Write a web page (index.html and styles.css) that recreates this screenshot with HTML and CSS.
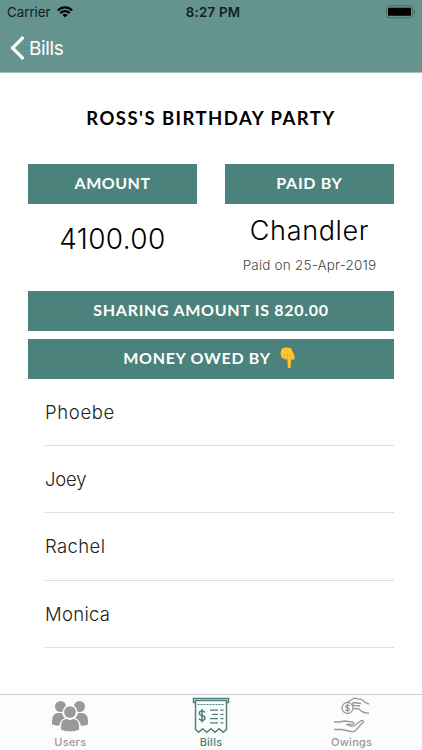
FILE: index.html
```
<!DOCTYPE html>
<html lang="en">
<head>
<meta charset="utf-8">
<title>Bills</title>
<link rel="stylesheet" href="styles.css">
</head>
<body>
<div class="screen">
  <header class="header">
    <div class="status">
      <div class="carrier"><span>Carrier</span>
        <svg width="16" height="12" viewBox="0 0 16 12" fill="none" stroke="#000" stroke-width="2.2"><path d="M.8 4.5C5 .3 11 .3 15.200 4.500M3.300 7.100C6 4.500 10 4.500 12.700 7.100"/><path fill="#000" stroke="none" d="M8 11.600 5.400 8.900Q8 6.800 10.600 8.900Z"/></svg>
      </div>
      <div class="time">8:27 PM</div>
      <svg class="battery" width="30" height="14" viewBox="0 0 30 14"><rect x=".5" y=".8" width="26" height="12" rx="3" fill="none" stroke="#456e69"/><rect x="2" y="2.800" width="23" height="8" rx="1"/><path d="M28 4.800q2 2 0 4z" fill="#385852"/></svg>
    </div>
    <div class="nav">
      <svg width="15" height="24" viewBox="0 0 15 24" fill="none" stroke="#fff" stroke-width="3.200"><path d="M13.400 1.200 2.500 12l10.900 10.800"/></svg>
      <span class="back">Bills</span>
    </div>
  </header>
  <main class="main">
    <h1 class="title">ROSS'S BIRTHDAY PARTY</h1>
    <div class="summary">
      <section class="col">
        <h2 class="bar"><span class="amount-label">AMOUNT</span></h2>
        <div class="amount">4100.00</div>
      </section>
      <section class="col">
        <h2 class="bar"><span class="paid-label">PAID BY</span></h2>
        <div class="payer">Chandler</div>
        <div class="date">Paid on 25-Apr-2019</div>
      </section>
    </div>
    <h2 class="bar sharing"><span>SHARING AMOUNT IS 820.00</span></h2>
    <h2 class="bar owed"><span>MONEY OWED BY</span>
      <svg width="18" height="22" viewBox="0 0 18 22"><path d="M3 1.500Q7-.3 12 1.200l2.500 5q1.500 2.500 1 5.500-.5 1.500-2.500.8l-1-.5-.3 7.500q-.2 1.700-1.500 1.700t-1.500-1.700L8.500 12q-1.500 1.200-2.500 0-1.600.6-2.300-.8Q1.800 11 2 9L1.500 6Z" fill="#ffc62f"/><path d="M8.600 12.200 8 7.800M5.800 11.800l-.6-4M3.500 10.800 3 7.300M8 7.500q2.500 2 4-.5M11.900 12l-1-2" fill="none" stroke="#e5a024" stroke-width=".7"/></svg>
    </h2>
    <ul class="list">
      <li><span class="n1">Phoebe</span></li>
      <li><span class="n2">Joey</span></li>
      <li><span class="n3">Rachel</span></li>
      <li><span class="n4">Monica</span></li>
    </ul>
  </main>
  <nav class="tabs">
    <div class="tab">
      <svg width="38" height="33" viewBox="0 0 38 33" fill="#999"><circle cx="9.500" cy="6.500" r="5.500"/><circle cx="28.500" cy="6.500" r="5.500"/><path d="M1 24.500v-4q0-7 6-7.500h4q.5 3.500 3 5-5 2-5.700 7.500Q5 26 1 24.500ZM37 24.500v-4q0-7-6-7.500h-4q-.5 3.500-3 5 5 2 5.700 7.500 4.300.5 7.300-1Z"/><circle cx="19" cy="12" r="6.600" stroke="#fcfcfc" stroke-width="1.500"/><path d="M9.500 30v-3.500q0-7.500 6-8 3.500 2 7 0 6 .5 6 8V30q-9.500 4-19 0Z" stroke="#fcfcfc"/></svg>
      <span>Users</span>
    </div>
    <div class="tab active">
      <svg width="38" height="37" viewBox="0 0 38 37" fill="none" stroke="#4b827b" stroke-width="1.500"><path d="M3 5.500H1.500v-4h35v4H35M3.500 3.500v29l3.200 2.700 4-3.500 4.100 3.500 4.100-3.500 4.100 3.500 4.100-3.500 4.100 3.500 3.300-2.700v-29M3 3.500h32"/><path d="M5.500 7.500h27" stroke-width="1" stroke-dasharray="2 1"/><path d="M13 15.500q-1-1.500-3-1.500-2.700 0-2.700 2.200 0 1.700 2.700 2.300 3 .7 3 2.700t-3 2.200q-2 0-3-1.700M10 12v13.500"/><path stroke-width="1.200" d="M18 13.200h8M28.500 13.200h3M20 17.400h6M28.500 17.400h3M18 21.600h8M28.500 21.600h3M18 25.800h8M28.500 25.800h3"/></svg>
      <span>Bills</span>
    </div>
    <div class="tab">
      <svg width="38" height="37" viewBox="0 0 38 37" fill="none" stroke="#999" stroke-width="1.300" stroke-linejoin="round"><circle cx="14.500" cy="11" r="5.500"/><path d="M16.600 8.900q-2-1.300-3.400-.2-1.300 1.600 1.300 2.200 2.700.8 1.400 2.300-1.600 1.300-3.500-.4M14.500 7v8"/><path d="M14 5.500 21 1.200l8 1.500q2.500 3.300 7 4.300M20 5.500l8 1M20 5.500q-1 2.500 1 3l6 .5M20.500 11.500l5.500.5q4 4.500 10 4M1 25h5.500l5-1q4 .8 8 .8 2.500 1.200 0 2.500h-6l5 2q2 .5 4-1.500l5.500-4q2.500-1 2.500 1l-8 8.700q-1.500 1.500-4.500 1l-9-2H1"/></svg>
      <span>Owings</span>
    </div>
  </nav>
</div>
</body>
</html>
```
FILE: styles.css
```
* { box-sizing: border-box; }
body { margin: 0; background: #fff; font-family: Inter, "Liberation Sans", sans-serif; color: #000; }
svg { display: block; flex: none; }
.screen { width: 422px; height: 750px; display: flex; flex-direction: column; overflow: hidden; }
.header { height: 73px; background: #65938e; border-bottom: 1px solid #a3bebb; flex: none; }
.status { height: 24px; display: grid; grid-template-columns: 1fr auto 1fr; align-items: center; padding: 0 6px 0 7px; }
.carrier { display: flex; align-items: center; gap: 6px; font-size: 13.300px; color: #14201f; }
.time { font-size: 13.300px; font-weight: 600; letter-spacing: .2px; color: #14201f; padding-left: 3px; }
.battery { justify-self: end; }
.nav { height: 48px; display: flex; align-items: center; gap: 4px; padding-left: 10px; color: #fff; font-size: 19px; letter-spacing: -.4px; }
.main { flex: 1; padding: 0 28px; }
.title { margin: 0; height: 91px; text-align: center; font: 700 18.500px/90px Lato, sans-serif; letter-spacing: 1.450px; white-space: nowrap; }
.summary { display: grid; grid-template-columns: 1fr 1fr; gap: 28px; height: 127px; }
.col { text-align: center; }
.bar { margin: 0; height: 39.500px; padding-bottom: 1px; background: #4b827b; color: #fff; display: flex; align-items: center; justify-content: center; font: 700 16px/20px Lato, sans-serif; letter-spacing: .700px; }
.amount-label { letter-spacing: .5px; }
.owed { margin-top: 8.500px; gap: 8px; padding-right: 2px; }
.amount { font-size: 28px; font-weight: 300; line-height: 34px; margin-top: 18.500px; letter-spacing: .350px; }
.payer { font-size: 27px; font-weight: 300; line-height: 34px; margin-top: 10.500px; letter-spacing: .650px; }
.date { font-size: 13.500px; font-weight: 300; line-height: 18px; margin-top: 8px; color: #444; letter-spacing: .2px; }
.list { list-style: none; margin: 0; padding: 0 0 0 17px; }
.list li { height: 67.400px; border-bottom: 1px solid #dedede; display: flex; align-items: center; font-size: 18.500px; font-weight: 350; color: #222; }
.n1 { letter-spacing: .650px; }
.n2 { letter-spacing: -.2px; }
.n3 { letter-spacing: .400px; }
.n4 { letter-spacing: .300px; }
.tabs { height: 56px; flex: none; border-top: 1px solid #ccc; display: grid; grid-template-columns: repeat(3, 1fr); background: #fcfcfc; }
.tab { display: flex; flex-direction: column; align-items: center; justify-content: space-between; padding: 2px 0 1px; font-size: 11px; line-height: 14px; font-weight: 500; color: #999; letter-spacing: .250px; }
.tab:first-child { padding-top: 5px; }
.active { color: #4b827b; }
```
